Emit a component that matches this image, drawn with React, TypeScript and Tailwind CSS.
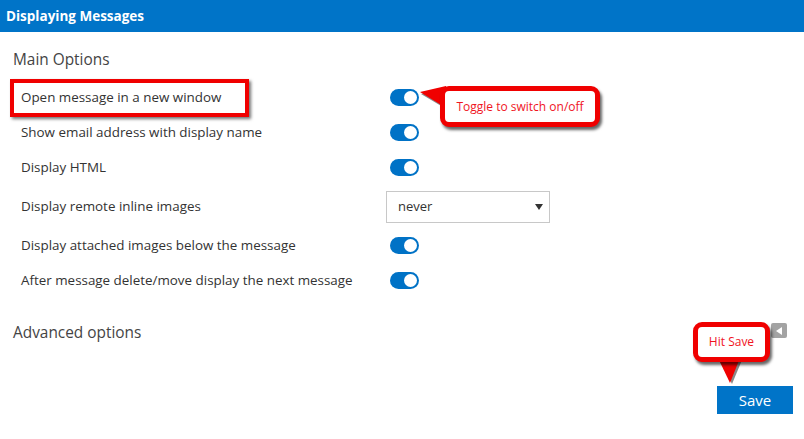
import React from "react";

const options: { label: string; kind: "toggle" | "select" }[] = [
  { label: "Open message in a new window", kind: "toggle" },
  { label: "Show email address with display name", kind: "toggle" },
  { label: "Display HTML", kind: "toggle" },
  { label: "Display remote inline images", kind: "select" },
  { label: "Display attached images below the message", kind: "toggle" },
  { label: "After message delete/move display the next message", kind: "toggle" },
];

function Toggle() {
  return (
    <div className="ml-[4px] flex h-[17px] w-[29px] items-center justify-end rounded-full bg-[#0072c6] pr-[2px]">
      <div className="h-[13px] w-[13px] rounded-full bg-white" />
    </div>
  );
}

function Select() {
  return (
    <div className="flex h-[32px] w-[164px] items-center justify-between border border-[#c8c8c8] bg-white pl-[11px] pr-[6px] text-[13px] text-[#333]">
      <span>never</span>
      <svg width="8" height="6" viewBox="0 0 8 6">
        <path d="M0 0 L8 0 L4 6 Z" fill="#333" />
      </svg>
    </div>
  );
}

export default function App() {
  return (
    <div
      className="relative h-[439px] w-[804px] overflow-hidden bg-white"
      style={{ fontFamily: '"Open Sans", "Noto Sans", sans-serif' }}
    >
      <div className="flex h-[32px] items-center bg-[#0074c8] px-[6px] text-[13.5px] font-bold text-white">
        Displaying Messages
      </div>

      <div className="mt-[16px] px-[13px] text-[15.4px] leading-[24px] text-[#444]">Main Options</div>

      <div className="mt-[8px] flex flex-col">
        {options.map((o) => (
          <div
            key={o.label}
            className={`flex items-center pl-[21px] ${o.kind === "select" ? "h-[43px]" : "h-[35px]"}`}
          >
            <div className="w-[365px] text-[13.4px] text-[#333]">{o.label}</div>
            {o.kind === "toggle" ? <Toggle /> : <Select />}
          </div>
        ))}
      </div>

      <div className="mt-[23px] flex items-start justify-between px-[13px]">
        <div className="text-[15.4px] leading-[24px] text-[#444]">Advanced options</div>
        <div className="mt-[2px] mr-[4px] flex h-[15px] w-[16px] items-center justify-center rounded-[2px] bg-[#a3a3a3]">
          <svg width="6" height="8" viewBox="0 0 6 8">
            <path d="M6 0 L6 8 L0 4 Z" fill="#fff" />
          </svg>
        </div>
      </div>

      <div className="mt-[41px] flex justify-end pr-[11px]">
        <button className="flex h-[28px] w-[76px] items-center justify-center bg-[#0074c8] text-[15px] text-white">
          Save
        </button>
      </div>

      {/* highlight around first option */}
      <div className="pointer-events-none absolute left-[10px] top-[79px] h-[38px] w-[239px] border-[4px] border-[#f00000] shadow-[2px_2px_3px_rgba(0,0,0,0.55)]" />

      {/* callout: toggle */}
      <svg className="absolute left-[418px] top-[86px]" width="32" height="30" viewBox="0 0 32 30">
        <path d="M3 8 L30 2 L30 24 Z" fill="#3a3a3a" opacity="0.6" />
        <path d="M2 6 L28 0 L28 22 Z" fill="#f00000" />
      </svg>
      <div className="absolute left-[440px] top-[86px] flex h-[41px] w-[160px] items-center justify-center rounded-[9px] border-[5px] border-[#f00000] bg-white text-[12px] text-[#f0141e] shadow-[2px_3px_3px_rgba(0,0,0,0.6)]">
        Toggle to switch on/off
      </div>

      {/* callout: save */}
      <svg className="absolute left-[717px] top-[358px]" width="26" height="28" viewBox="0 0 26 28">
        <path d="M3 2 L25 2 L15 26 Z" fill="#3a3a3a" opacity="0.6" />
        <path d="M1 0 L23 0 L13 25 Z" fill="#f00000" />
      </svg>
      <div className="absolute left-[693px] top-[322px] flex h-[40px] w-[77px] items-center justify-center rounded-[9px] border-[5px] border-[#f00000] bg-white text-[12px] text-[#f0141e] shadow-[2px_3px_3px_rgba(0,0,0,0.6)]">
        Hit Save
      </div>
    </div>
  );
}
